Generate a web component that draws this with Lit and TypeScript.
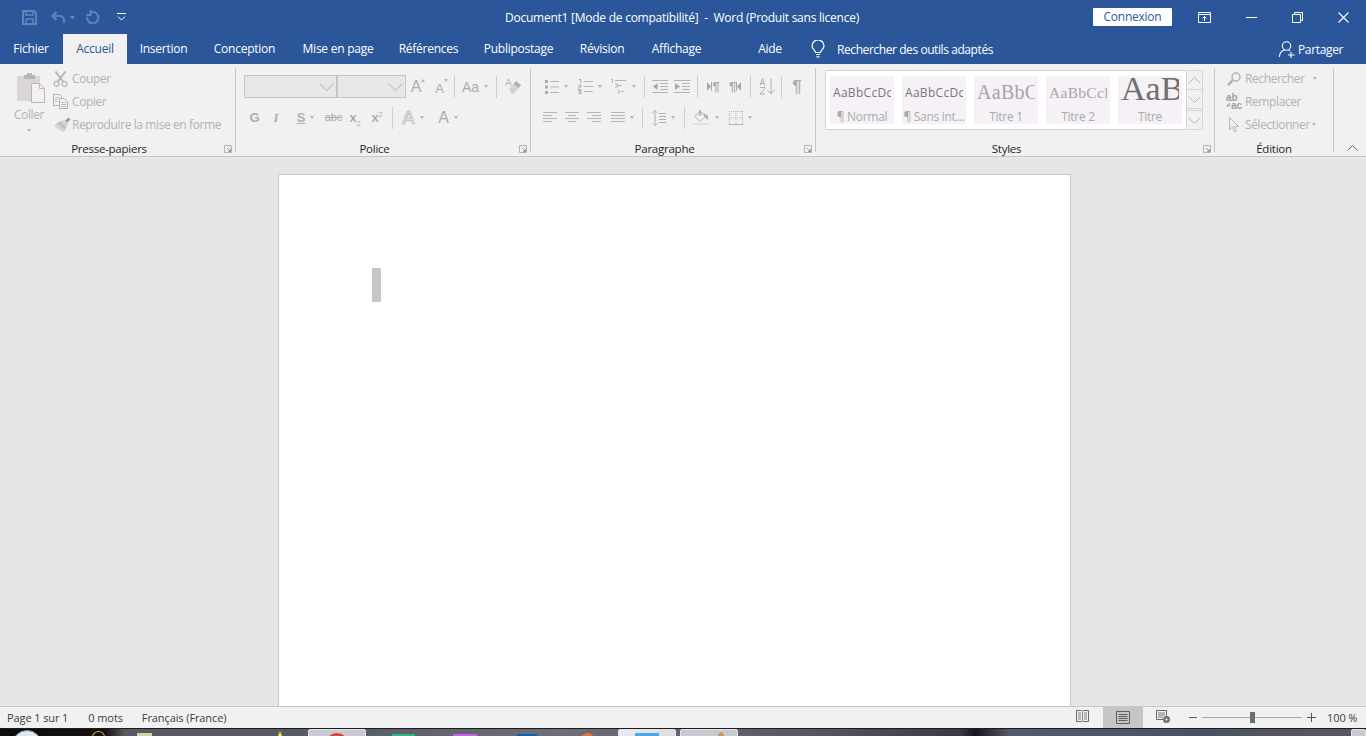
import { LitElement, html, css } from 'lit';
import { customElement } from 'lit/decorators.js';

const caret = html`<i class="caret"></i>`;
const vs = html`<i class="vs"></i>`;

// toolbar icons, drawn at the pixel size they have in the ribbon
const I = {
  save: html`<svg width="15" height="15" viewBox="0 0 15 15" fill="none" stroke="#6084b8" stroke-width="2"><path d="M1 1h11l2 2v11H1z"/><path d="M4 1v4h7V1M4 14V9h7v5" stroke-width="1.6"/></svg>`,
  undo: html`<svg width="15" height="13" viewBox="0 0 15 13" fill="none" stroke="#6084b8" stroke-width="2"><path d="M5.5 1 1.5 5l4 4"/><path d="M2 5h7a4 4 0 0 1 4 4v3"/></svg>`,
  redo: html`<svg width="14" height="14" viewBox="0 0 14 14" fill="none" stroke="#6084b8" stroke-width="2"><path d="M5 2.400A5.600 5.600 0 1 1 1.200 7"/><path d="M4.500 0v5h-4"/></svg>`,
  qat: html`<svg width="9" height="8" viewBox="0 0 9 8" fill="none" stroke="#fff"><path d="M0 .5h9"/><path d="M1 3.5 4.5 7 8 3.5"/></svg>`,
  display: html`<svg width="13" height="11" viewBox="0 0 13 11" fill="none" stroke="#fff"><path d="M.5.5h12v10H.5zM.5 2.5h12"/><path d="M6.5 9V4.5M4.5 6.5l2-2 2 2" /></svg>`,
  min: html`<svg width="11" height="1" viewBox="0 0 11 1"><path d="M0 0h11v1H0z" fill="#fff"/></svg>`,
  restore: html`<svg width="11" height="11" viewBox="0 0 11 11" fill="none" stroke="#fff"><path d="M.5 2.5h8v8h-8z"/><path d="M2.5 2.5v-2h8v8h-2"/></svg>`,
  close: html`<svg width="11" height="11" viewBox="0 0 11 11" fill="none" stroke="#fff" stroke-width="1.1"><path d="M.5.5l10 10M10.500.5l-10 10"/></svg>`,
  bulb: html`<svg width="14" height="18" viewBox="0 0 14 18" fill="none" stroke="#fff" stroke-width="1.2"><path d="M4.5 12.5C4.3 10 1 9 1 6a6 6 0 0 1 12 0c0 3-3.3 4-3.5 6.5z"/><path d="M5 14.5h4M5.5 16.8h3"/></svg>`,
  person: html`<svg width="16" height="17" viewBox="0 0 16 17" fill="none" stroke="#fff" stroke-width="1.1"><circle cx="7.5" cy="5" r="4.2"/><path d="M.5 16c0-4 2.5-6.5 5.5-7M9.5 9.2c.6.2 1.100.4 1.600.8"/><path d="M12 11v6M9 14h6.500"/></svg>`,
  paste: html`<svg width="29" height="31" viewBox="0 0 29 31"><path d="M1 4h23v25H1z" fill="#d9d5d9"/><path d="M8 3h3V1h5v2h3v4H8z" fill="#b8b5b8"/><path d="M15.500 11.500h8l5 5v14h-13z" fill="#f4f0f6" stroke="#b9b7b9"/><path d="M23.500 11.500v5h5" fill="none" stroke="#b9b7b9"/></svg>`,
  cut: html`<svg width="15" height="16" viewBox="0 0 15 16" fill="none" stroke="#b5b5b5" stroke-width="1.500"><path d="M2.500 .5 10 10.500M12.500.5 5 10.500" stroke-width="2"/><circle cx="3.500" cy="12.800" r="2.500" stroke-width="1.200"/><circle cx="11.500" cy="12.800" r="2.500" stroke-width="1.200"/></svg>`,
  copy: html`<svg width="15" height="15" viewBox="0 0 15 15" fill="#f1f1f1" stroke="#b0b0b0"><path d="M.5.500h6l2 2v9h-8z"/><path d="M6.500 4.500h5l3 3v7h-8z"/><path d="M2 3.500h4M2 5.500h3M2 7.500h3M8 8.500h5M8 10.500h5M8 12.500h5" stroke-width=".8"/></svg>`,
  brush: html`<svg width="18" height="15" viewBox="0 0 18 15"><path d="M12 3.500 15.500.5l2 2-3.500 3.500z" fill="#9b9b9b"/><path d="M5 5l6-2 4 4-3 6-2 2-9-6z" fill="#d3d3d3"/><path d="M7 4.500l6 5.500-1.500 2.500L5 6.500z" fill="#bdbdbd"/></svg>`,
  eraser: html`<svg width="16" height="17" viewBox="0 0 16 17"><path d="M4 11 11 3l5 4-7 8.500-2.500.5z" fill="#d3d3d3"/><path d="M8.500 6 11 3l5 4-2.500 3z" fill="#b4b4b4"/><path d="M.5 8 3.500 .8 6.500 8M1.600 5.500h3.800" fill="none" stroke="#b5b5b5"/></svg>`,
  bullets: html`<svg width="14" height="14" viewBox="0 0 14 14"><path d="M0 0h3v3H0zM0 5.500h3v3H0zM0 11h3v3H0z" fill="#ababab"/><path d="M5 1.500h9M5 7h9M5 12.500h9" stroke="#b5b5b5"/></svg>`,
  numbers: html`<svg width="15" height="15" viewBox="0 0 15 15"><path d="M6 2.500h9M6 7.500h9M6 12.500h9" stroke="#b5b5b5"/><path d="M1 .5h2v4M.5 6h2.500v2H.5v2.500H3M.5 11.500H3v3H.5M1 13h2" fill="none" stroke="#a8a8a8" stroke-width=".9"/></svg>`,
  multi: html`<svg width="17" height="16" viewBox="0 0 17 16"><path d="M5 1.500h11M8 6.500h4M11 12.500h3" stroke="#b5b5b5"/><path d="M1 .5h1.500v3.500M5 5h2.500v3H5M8 11h1v4" fill="none" stroke="#a8a8a8" stroke-width=".9"/></svg>`,
  outdent: html`<svg width="16" height="13" viewBox="0 0 16 13" fill="none" stroke="#b5b5b5"><path d="M0 .5h16M8 3.500h8M8 6.500h8M8 9.500h8M0 12.500h16"/><path d="M5.500 3v7L1 6.500z" fill="#a8a8a8" stroke="none"/><path d="M2 6.500h4" stroke="#a8a8a8"/></svg>`,
  indent: html`<svg width="16" height="13" viewBox="0 0 16 13" fill="none" stroke="#b5b5b5"><path d="M0 .5h16M8 3.500h8M8 6.500h8M8 9.500h8M0 12.500h16"/><path d="M1 3v7l5-3.500z" fill="#a8a8a8" stroke="none"/></svg>`,
  ltr: html`<svg width="5" height="9" viewBox="0 0 5 9"><path d="M0 0v9l4-4.500z" fill="#a8a8a8"/><path d="M4.500 0v9" stroke="#a8a8a8"/></svg>`,
  rtl: html`<svg width="5" height="9" viewBox="0 0 5 9"><path d="M5 0v9L1 4.500z" fill="#a8a8a8"/><path d="M.5 0v9" stroke="#a8a8a8"/></svg>`,
  sort: html`<svg width="16" height="17" viewBox="0 0 16 17" fill="none" stroke="#adadad"><path d="M12 .5v15M8.500 12l3.500 4 3.500-4"/><path d="M1 7.500 3.500.8 6 7.500M2 5.500h3M1 9.500h5v1l-5 5.500h5"/></svg>`,
  left: html`<svg width="14" height="11" viewBox="0 0 14 11" stroke="#b5b5b5"><path d="M0 .5h14M0 3.500h9M0 6.500h14M0 9.500h9" /></svg>`,
  center: html`<svg width="14" height="11" viewBox="0 0 14 11" stroke="#b5b5b5"><path d="M0 .5h14M3 3.500h8M0 6.500h14M3 9.500h8" /></svg>`,
  right: html`<svg width="14" height="11" viewBox="0 0 14 11" stroke="#b5b5b5"><path d="M0 .5h14M5 3.500h9M0 6.500h14M5 9.500h9" /></svg>`,
  justify: html`<svg width="14" height="11" viewBox="0 0 14 11" stroke="#b5b5b5"><path d="M0 .5h14M0 3.500h14M0 6.500h14M0 9.500h14" /></svg>`,
  spacing: html`<svg width="14" height="16" viewBox="0 0 14 16" fill="none" stroke="#b0b0b0"><path d="M3 .5v15M.5 3 3 .5 5.500 3M.5 13 3 15.500 5.500 13"/><path d="M7 3.500h7M7 6.500h7M7 9.500h7M7 12.500h7"/></svg>`,
  fill: html`<svg width="17" height="15" viewBox="0 0 17 15"><path d="M0 13h16v2H0z" fill="#e4dfe4"/><path d="M7 1 12.500 6.500 7 11.500 2 6.500z" fill="#f1f1f1" stroke="#b0b0b0"/><path d="M6 0h2v6H6z" fill="#b5b5b5"/><path d="M10 3l5 3v4l-3-3z" fill="#a8a8a8"/></svg>`,
  borders: html`<svg width="14" height="14" viewBox="0 0 14 14" fill="none" stroke="#b5b5b5" stroke-dasharray="1 1"><path d="M.5 0v14M7 0v14M13.500 0v14M0 .5h14M0 7h14"/><path d="M0 13.500h14" stroke-dasharray="none"/></svg>`,
  search: html`<svg width="14" height="14" viewBox="0 0 14 14" fill="none" stroke="#b5b5b5"><circle cx="9" cy="5" r="4" stroke-width="1.500"/><path d="M6 8 1 13" stroke-width="2.500"/></svg>`,
  swap: html`<svg width="5" height="5" viewBox="0 0 5 5" fill="none" stroke="#a0a0a0"><path d="M3.500 0v2.500H1M2.500 1 .8 2.500 2.500 4"/></svg>`,
  pointer: html`<svg width="10" height="16" viewBox="0 0 10 16" fill="#f1f1f1" stroke="#b5b5b5"><path d="M.5.500v12l3-2.500 2 5 2-1-2-4.500h4z"/></svg>`,
  launcher: html`<svg class="launch" width="8" height="8" viewBox="0 0 8 8" fill="none" stroke="#b5b5b5"><path d="M.5 7.500v-7h7v7z"/><path d="M3 3l3.500 3.500M6.500 4v2.500H4" stroke="#9a9a9a"/></svg>`,
  readMode: html`<svg width="13" height="12" viewBox="0 0 13 12" fill="none" stroke="#6a6a6a"><path d="M.5.500h5L6.500 1.500l1-1h5v11h-5l-1-.8-1 .8h-5z"/><path d="M6.500 1.500v9.500M2 3h3M2 5h3M2 7h3M2 9h3M8 3h3M8 5h3M8 7h3M8 9h3" stroke-width=".8"/></svg>`,
  printMode: html`<svg width="14" height="13" viewBox="0 0 14 13" fill="none" stroke="#5f5f5f"><path d="M.5.500h13v12H.5z"/><path d="M2.500 3.500h9M2.500 5.500h9M2.500 7.500h9M2.500 9.500h9" /></svg>`,
  webMode: html`<svg width="14" height="13" viewBox="0 0 14 13"><path d="M.5.500h10v9H.5z" fill="none" stroke="#6a6a6a"/><path d="M2 3h7M2 5h7M2 7h5" stroke="#6a6a6a" stroke-width=".9"/><circle cx="10.500" cy="9.500" r="3.500" fill="#6d6d6d"/><path d="M8.500 9.500h4M10.500 7.500v4" stroke="#f1f1f1" stroke-width=".6"/></svg>`,
  chevUp: html`<svg width="11" height="6" viewBox="0 0 11 6" fill="none" stroke="#666"><path d="M.5 5.500l5-5 5 5"/></svg>`,
  up: html`<svg width="13" height="7" viewBox="0 0 13 7" fill="none" stroke="#b8b8b8"><path d="M.5 6.500l6-6 6 6"/></svg>`,
  down: html`<svg width="13" height="7" viewBox="0 0 13 7" fill="none" stroke="#b8b8b8"><path d="M.5.500l6 6 6-6"/></svg>`,
  chev: html`<svg width="15" height="8" viewBox="0 0 15 8" fill="none" stroke="#b5b5b5"><path d="M.5.500l7 7 7-7"/></svg>`,
};

const tabs = [
  ['Fichier', 62], ['Accueil', 65], ['Insertion', 73], ['Conception', 89], ['Mise en page', 98],
  ['Références', 83], ['Publipostage', 97], ['Révision', 70], ['Affichage', 79], ['', 29], ['Aide', 50],
] as const;

const gallery = [
  ['AaBbCcDc', '¶ Normal', 'sans'], ['AaBbCcDc', '¶ Sans int…', 'sans'], ['AaBbC', 'Titre 1', 't1'],
  ['AaBbCcl', 'Titre 2', 't2'], ['AaB', 'Titre', 't0'],
];

// strip of the desktop taskbar under the window: [width, top offset, kind]
const taskbar: [number, number, string][] = [
  [12, 0, ''], [30, 1, 'orb'], [50, 0, ''], [13, 2, 'ring'], [32, 0, ''], [15, 4, 'beige'], [123, 0, ''],
  [10, 2, 'tri'], [23, 0, ''], [58, 0, 'btn red'], [26, 0, ''], [23, 5, 'green'], [38, 0, ''], [24, 5, 'purple'],
  [40, 0, ''], [20, 5, 'blue'], [44, 0, ''], [13, 4, 'orange'], [24, 0, ''], [58, 0, 'btn on sky'], [4, 0, ''],
  [58, 0, 'btn amber'], [613, 0, ''], [15, 0, 'btn'],
];

@customElement('app-root')
export class AppRoot extends LitElement {
  static styles = css`
    :host {
      display: flex;
      flex-direction: column;
      height: 736px;
      overflow: hidden;
      font: 12px 'Open Sans', 'Noto Sans', sans-serif;
      letter-spacing: -0.25px;
      color: #262626;
      background: #e6e6e6;
    }
    i { font-style: normal; display: block; }
    .titlebar {
      height: 34px;
      background: #2b579a;
      color: #fff;
      display: grid;
      grid-template-columns: 22px 15px 14px 15px 4px 5px 11px 14px 17px 9px 967px 79px 26px 13px 35px 11px 35px 11px 35px 11px 17px;
      align-items: center;
    }
    .dd { width: 5px; height: 0; border: 2.5px solid transparent; border-top: 3px solid #6084b8; border-bottom: 0; box-sizing: border-box; }
    .doc-title { text-align: center; padding-left: 145px; white-space: pre; }
    .connexion {
      background: #fff;
      color: #2b579a;
      height: 18px;
      line-height: 18px;
      text-align: center;
      border-radius: 1px;
    }
    .tabbar {
      height: 30px;
      background: #2b579a;
      color: #fff;
      display: flex;
      align-items: center;
    }
    .tab { height: 30px; line-height: 30px; text-align: center; flex: none; }
    .tab.active { background: #f1f1f1; color: #2b579a; margin-left: 1px; }
    .tell { display: flex; align-items: center; margin-left: 16px; gap: 12px; width: 468px; letter-spacing: -0.42px; }
    .share { display: flex; align-items: center; gap: 3px; letter-spacing: -0.35px; }
    .ribbon {
      height: 92px;
      background: #f1f1f1;
      border-bottom: 1px solid #c6c6c6;
      display: flex;
      color: #b1b1b1;
      flex: none;
      letter-spacing: -0.4px;
    }
    .group { display: flex; flex-direction: column; flex: none; height: 92px; }
    .g1 { width: 235px; }
    .g2 { width: 294px; }
    .g3 { width: 284px; }
    .g4 { width: 398px; }
    .g5 { width: 118px; }
    .sep { width: 1px; margin: 4px 0; background: #c6c6c6; flex: none; }
    .body { height: 75px; }
    .glabel { height: 15px; display: flex; align-items: center; color: #262626; font-size: 11.5px; letter-spacing: -0.25px; }
    .glabel span { flex: 1; text-align: center; }
    .launch { margin: 0 3px 0 6px; }
    .caret { width: 0; height: 0; border: 2.5px solid transparent; border-top: 3px solid #b5b5b5; border-bottom: 0; flex: none; }
    .vs { width: 1px; height: 22px; background: #cfcfcf; justify-self: center; }
    .body1 { display: flex; padding: 3px 0 0 12px; }
    .paste { width: 34px; display: flex; flex-direction: column; align-items: center; padding-top: 5px; margin-right: 6px; }
    .paste svg { margin-left: 2px; }
    .paste span { margin-top: 3px; }
    .paste .caret { margin-top: 6px; }
    .small { display: flex; align-items: center; height: 23px; }
    .small b { font-weight: 400; width: 20px; display: flex; justify-content: center; flex: none; }
    .body1 .small b { justify-content: flex-start; padding-left: 1px; box-sizing: border-box; }
    .body5 .small b { width: 22px; }
    .small .wide { margin-left: 8px; }
    .small .near { margin-left: 2px; }
    .repl { color: #a0a0a0; font-size: 10px; font-weight: 700; line-height: 8px; letter-spacing: 0; font-family: 'Liberation Sans', sans-serif; }
    .repl div { display: flex; align-items: center; }
    .body2, .body3 { padding: 11px 0 0 8px; display: flex; flex-direction: column; gap: 8px; }
    .row { display: grid; height: 23px; align-items: center; justify-items: center; }
    .r21 { grid-template-columns: 93px 69px 24px 23px 3px 38px 4px 30px; }
    .r22 { grid-template-columns: 21px 22px 37px 19px 24px 20px 10px 32px 38px; }
    .r31 { grid-template-columns: 34px 34px 32px 10px 22px 22px 8px 25px 18px 13px 20px 9px 22px; }
    .r32 { grid-template-columns: 22px 22px 22px 34px 7px 34px 9px 33px 36px; }
    .combo {
      justify-self: stretch;
      height: 23px;
      box-sizing: border-box;
      background: #e7e7e7;
      border: 1px solid #c6c6c6;
      display: flex;
      align-items: center;
      justify-content: flex-end;
      padding-right: 2px;
    }
    .with { display: flex; align-items: center; gap: 5px; }
    .gl { color: #adadad; line-height: 1; font-family: 'Liberation Sans', sans-serif; letter-spacing: 0; }
    .gl.b { font-weight: 700; font-size: 13px; }
    .gl.big { font-size: 16px; }
    .gl.med { font-size: 14px; }
    .gl.it { font: italic 700 13px 'Liberation Serif', serif; }
    .para { font-size: 13px; font-weight: 700; }
    .pil { font-size: 17px; font-weight: 700; }
    .dir { display: flex; align-items: center; }
    .grow { font-size: 16px; position: relative; padding-right: 4px; }
    .grow::after { content: ''; position: absolute; right: 0; top: 0; border: 2.500px solid transparent; border-bottom: 3px solid #b5b5b5; border-top: 0; }
    .grow.sm { font-size: 13px; padding-top: 3px; }
    .grow.sm::after { border: 2.500px solid transparent; border-top: 3px solid #b5b5b5; border-bottom: 0; }
    .outline { font-size: 18px; color: #f1f1f1; -webkit-text-stroke: 0.700px #b5b5b5; text-shadow: 0 0 2px #c8c8c8; }
    sub, sup { font-size: 7px; line-height: 0; font-weight: 400; }
    .strike { text-decoration: line-through; font-size: 11px; }
    .under { text-decoration: underline; }
    .body4 { padding: 6px 0 0 9px; display: flex; }
    .gal {
      width: 362px;
      height: 60px;
      box-sizing: border-box;
      border: 1px solid #d4d4d4;
      background: #fff;
      padding: 5px 4px;
      display: flex;
      gap: 8px;
    }
    .item { width: 64px; height: 48px; background: #f5f1f7; display: flex; flex-direction: column; align-items: center; overflow: hidden; flex: none; }
    .sample { height: 33px; width: 58px; overflow: hidden; white-space: nowrap; display: flex; align-items: center; color: #777; letter-spacing: 0; }
    .sans { font-size: 12px; letter-spacing: 0.3px; }
    .t1 { font: 20px 'Liberation Serif', serif; color: #a8a2a8; letter-spacing: 0.300px; }
    .t2 { font: 15.500px 'Liberation Serif', serif; color: #aaa5aa; letter-spacing: 0.300px; }
    .t0 { font: 34px 'Liberation Serif', serif; color: #6f6f6f; align-items: flex-start; line-height: 25px; }
    .item small { font-size: 12px; color: #aaa; height: 15px; line-height: 15px; letter-spacing: -0.3px; }
    .scroll { display: flex; flex-direction: column; width: 16px; height: 60px; box-sizing: border-box; border: 1px solid #d4d4d4; border-left: 0; }
    .scroll div { flex: 1; display: flex; align-items: center; justify-content: center; border-bottom: 1px solid #d4d4d4; }
    .scroll div:last-child { border-bottom: 0; border-top: 1px solid #d4d4d4; margin-top: 1px; }
    .body5 { padding: 3px 0 0 8px; }
    .collapse { flex: 1; display: flex; justify-content: center; align-items: flex-end; padding: 0 0 5px 5px; }
    .canvas { flex: 1; min-height: 0; display: flex; justify-content: center; padding-top: 17px; overflow: hidden; }
    .page {
      width: 793px;
      height: 1000px;
      margin-left: -17px;
      box-sizing: border-box;
      background: #fff;
      border: 1px solid #c6c6c6;
      padding: 93px 0 0 93px;
      flex: none;
    }
    .cursor { width: 9px; height: 34px; background: #c6c6c6; }
    .status {
      height: 22px;
      box-sizing: border-box;
      border-top: 1px solid #c6c6c6;
      background: #f1f1f1;
      display: flex;
      align-items: center;
      flex: none;
      color: #3c3c3c;
      font-size: 11px;
      letter-spacing: -0.1px;
    }
    .stats { display: flex; gap: 20px; padding-left: 7px; width: 1069px; box-sizing: border-box; }
    .stats span:last-child { margin-left: -1px; }
    .views { display: grid; grid-template-columns: 34px 40px 40px; align-items: center; justify-items: center; height: 21px; width: 114px; }
    .views span:first-child { justify-self: start; margin-left: 7px; }
    .views .on { background: #c6c6c6; align-self: stretch; justify-self: stretch; display: flex; align-items: center; justify-content: center; }
    .zoom { display: flex; align-items: center; margin-left: 6px; }
    .minus { width: 8px; height: 1px; background: #555; }
    .slider { width: 100px; height: 1px; background: #aaa; margin: 0 5px; display: flex; align-items: center; justify-content: center; }
    .slider i { width: 5px; height: 11px; background: #6d6d6d; flex: none; }
    .plus { width: 9px; height: 9px; background: linear-gradient(#555, #555) center / 9px 1px no-repeat, linear-gradient(#555, #555) center / 1px 9px no-repeat; }
    .pct { margin-left: 11px; }
    .taskbar {
      height: 8px;
      flex: none;
      display: grid;
      overflow: hidden;
      box-sizing: border-box;
      border-top: 1px solid #1c1c1c;
      background: linear-gradient(90deg, #0f0d0c 0, #14110f 105px, #5c5a60 125px, #565a68 330px, #6e6e78 560px, #575a66 800px, #3a3a40 960px, #14141a 975px, #565a6a 1010px, #4d5060 1200px, #585a66 1366px);
    }
    .taskbar div { height: 12px; }
    .orb { background: #dfe9f2; border: 1px solid #6f93b4; border-radius: 50%; height: 30px !important; box-sizing: border-box; }
    .ring { border: 1px solid #d0a93c; border-radius: 50%; box-sizing: border-box; }
    .beige { background: #d9cfae; }
    .tri { background: #f7dc4a; clip-path: polygon(50% 0, 100% 100%, 0 100%); }
    .green { background: #32b878; }
    .purple { background: #c865e8; }
    .blue { background: #0d62b3; }
    .orange { background: #f0703c; border-radius: 50% 50% 0 0; }
    .btn { background: #c9cad0; border: 1px solid #e6e6ea; border-radius: 2px 2px 0 0; box-sizing: border-box; display: flex; justify-content: center; }
    .btn.on { background: linear-gradient(90deg, #e9e9ee, #dcdce2); }
    .btn::before { content: ''; display: block; width: 22px; height: 20px; margin-top: 3px; }
    .btn.red::before { background: #d9433a; border-radius: 50%; }
    .btn.sky::before { background: #4ba6ee; width: 24px; }
    .btn.amber::before { background: #c99a5c; width: 8px; margin: 2px 0 0 24px; border-radius: 50% 50% 0 0; }
  `;

  render() {
    return html`
      <div class="titlebar">
        <span></span>${I.save}<span></span>${I.undo}<span></span><i class="dd"></i><span></span>${I.redo}<span></span>${I.qat}
        <div class="doc-title">Document1 [Mode de compatibilité]  -  Word (Produit sans licence)</div>
        <div class="connexion">Connexion</div>
        <span></span>${I.display}<span></span>${I.min}<span></span>${I.restore}<span></span>${I.close}<span></span>
      </div>
      <div class="tabbar">
        ${tabs.map(([t, w]) => html`<div class="tab ${t === 'Accueil' ? 'active' : ''}" style="width:${t === 'Accueil' ? w - 1 : w}px">${t}</div>`)}
        <div class="tell">${I.bulb}<span>Rechercher des outils adaptés</span></div>
        <div class="share">${I.person}<span>Partager</span></div>
      </div>
      <div class="ribbon">
        <div class="group g1">
          <div class="body body1">
            <div class="paste">${I.paste}<span>Coller</span>${caret}</div>
            <div>
              <div class="small"><b>${I.cut}</b>Couper</div>
              <div class="small"><b>${I.copy}</b>Copier</div>
              <div class="small"><b>${I.brush}</b>Reproduire la mise en forme</div>
            </div>
          </div>
          <div class="glabel"><span>Presse-papiers</span>${I.launcher}</div>
        </div>
        <i class="sep"></i>
        <div class="group g2">
          <div class="body body2">
            <div class="row r21">
              <div class="combo">${I.chev}</div><div class="combo">${I.chev}</div>
              <span class="gl grow">A</span><span class="gl grow sm">A</span>${vs}
              <div class="with"><span class="gl med">Aa</span>${caret}</div>${vs}${I.eraser}
            </div>
            <div class="row r22">
              <span class="gl b">G</span><span class="gl it">I</span>
              <div class="with"><span class="gl b under">S</span>${caret}</div>
              <span class="gl strike">abc</span><span class="gl b">x<sub>2</sub></span><span class="gl b">x<sup>2</sup></span>${vs}
              <div class="with"><span class="gl outline">A</span>${caret}</div>
              <div class="with"><span class="gl big">A</span>${caret}</div>
            </div>
          </div>
          <div class="glabel"><span>Police</span>${I.launcher}</div>
        </div>
        <i class="sep"></i>
        <div class="group g3">
          <div class="body body3">
            <div class="row r31">
              <div class="with">${I.bullets}${caret}</div><div class="with">${I.numbers}${caret}</div><div class="with">${I.multi}${caret}</div>${vs}
              ${I.outdent}${I.indent}${vs}
              <div class="dir">${I.ltr}<span class="gl para">¶</span></div><div class="dir"><span class="gl para">¶</span>${I.rtl}</div>${vs}${I.sort}${vs}<span class="gl pil">¶</span>
            </div>
            <div class="row r32">
              ${I.left}${I.center}${I.right}<div class="with">${I.justify}${caret}</div>${vs}
              <div class="with">${I.spacing}${caret}</div>${vs}
              <div class="with">${I.fill}${caret}</div>
              <div class="with">${I.borders}${caret}</div>
            </div>
          </div>
          <div class="glabel"><span>Paragraphe</span>${I.launcher}</div>
        </div>
        <i class="sep"></i>
        <div class="group g4">
          <div class="body body4">
            <div class="gal">
              ${gallery.map(([s, n, c]) => html`<div class="item"><div class="sample ${c}">${s}</div><small>${n}</small></div>`)}
            </div>
            <div class="scroll"><div>${I.up}</div><div>${I.down}</div><div>${I.down}</div></div>
          </div>
          <div class="glabel"><span>Styles</span>${I.launcher}</div>
        </div>
        <i class="sep"></i>
        <div class="group g5">
          <div class="body body5">
            <div class="small"><b>${I.search}</b>Rechercher<i class="caret wide"></i></div>
            <div class="small"><b><span class="repl"><div>ab</div><div>${I.swap}ac</div></span></b>Remplacer</div>
            <div class="small"><b>${I.pointer}</b>Sélectionner<i class="caret near"></i></div>
          </div>
          <div class="glabel"><span>Édition</span></div>
        </div>
        <i class="sep"></i>
        <div class="collapse">${I.chevUp}</div>
      </div>
      <div class="canvas"><div class="page"><div class="cursor"></div></div></div>
      <div class="status">
        <div class="stats"><span>Page 1 sur 1</span><span>0 mots</span><span>Français (France)</span></div>
        <div class="views"><span>${I.readMode}</span><div class="on">${I.printMode}</div><span>${I.webMode}</span></div>
        <div class="zoom"><i class="minus"></i><div class="slider"><i></i></div><i class="plus"></i><span class="pct">100 %</span></div>
      </div>
      <div class="taskbar" style="grid-template-columns:${taskbar.map((t) => t[0] + 'px').join(' ')}">
        ${taskbar.map((t) => html`<div class=${t[2]} style="margin-top:${t[1]}px"></div>`)}
      </div>
    `;
  }
}
